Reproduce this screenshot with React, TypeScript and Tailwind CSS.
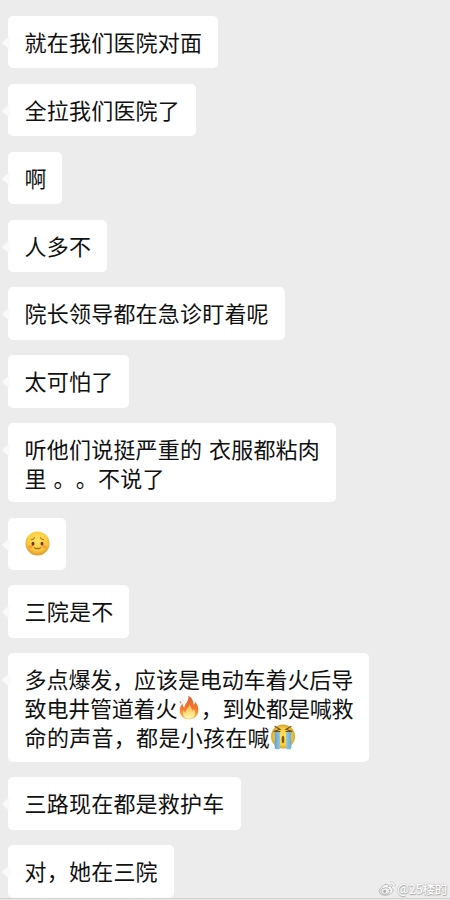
import type { ReactNode } from "react";

function ShyFace() {
  return (
    <svg viewBox="0 0 26 26" className="block size-[25px]">
      <defs>
        <radialGradient id="shy" cx="50%" cy="38%" r="62%">
          <stop offset="0" stopColor="#ffe564" />
          <stop offset="0.65" stopColor="#fdca3e" />
          <stop offset="1" stopColor="#dc982b" />
        </radialGradient>
        <radialGradient id="cheek">
          <stop offset="0" stopColor="#f56a30" stopOpacity="0.7" />
          <stop offset="1" stopColor="#f8852f" stopOpacity="0" />
        </radialGradient>
      </defs>
      <circle cx="13" cy="13" r="12.5" fill="url(#shy)" />
      <ellipse cx="5.8" cy="16.4" rx="3.6" ry="2.8" fill="url(#cheek)" />
      <ellipse cx="20.2" cy="16.4" rx="3.6" ry="2.8" fill="url(#cheek)" />
      <ellipse cx="8.3" cy="13.3" rx="1.5" ry="2" fill="#71360f" />
      <ellipse cx="17.7" cy="13.3" rx="1.5" ry="2" fill="#71360f" />
      <g fill="none" stroke="#a8651c" strokeWidth="1.1" strokeLinecap="round">
        <path d="M6.6 9Q8.8 8.8 9.9 7" />
        <path d="M19.4 9Q17.2 8.8 16.1 7" />
        <path d="M9.9 17.2Q11 19.2 13 17.9Q15 19.2 16.1 17.2" />
      </g>
    </svg>
  );
}

function Flame() {
  return (
    <svg viewBox="0 0 22 25" className="block h-[25px] w-[22px]">
      <defs>
        <linearGradient id="flame" x1="0" y1="0" x2="0" y2="1">
          <stop offset="0" stopColor="#df5930" />
          <stop offset="0.55" stopColor="#f37a31" />
          <stop offset="1" stopColor="#ffc248" />
        </linearGradient>
        <linearGradient id="core" x1="0" y1="0" x2="0" y2="1">
          <stop offset="0" stopColor="#ffab39" />
          <stop offset="0.7" stopColor="#ffe889" />
          <stop offset="1" stopColor="#fff5c4" />
        </linearGradient>
      </defs>
      <path d="M10.3.7C15 3.2 15.3 7 15.7 9.8C17 9 17 7.4 16.8 6.2C19.5 9.2 21 13 20.2 17C19.2 21.6 15.8 24.3 11.2 24.3C6 24.3 1.7 21 1.8 15.8C1.8 12.6 3.1 10.2 4.5 8.5C4.7 10.7 5.2 12 6.2 12.8C6.6 8.4 11.5 6 10.3.7Z" fill="url(#flame)" />
      <path d="M11.5 8.5C12 12 14.2 13 14.2 16C15.3 15.5 15.7 14.7 15.8 13.8C19 18.3 16.5 23.7 11.2 23.8C5.8 23.8 3.8 19.5 5.7 15.6C6.2 16.8 6.8 17.5 7.8 17.8C7.5 13.8 11.6 12.3 11.5 8.5Z" fill="url(#core)" />
      <path d="M2.3 6.1Q1.7 8 2.8 8.4Q3.8 7.4 2.3 6.1M4.5 4.5L5.2 5.8" fill="#ed6d33" stroke="#e49361" strokeWidth="0.5" />
    </svg>
  );
}

function CryingFace() {
  return (
    <svg viewBox="0 0 26 26" className="block size-[26px]">
      <defs>
        <radialGradient id="cry">
          <stop offset="0" stopColor="#ffe35c" />
          <stop offset="0.7" stopColor="#f9cf3d" />
          <stop offset="1" stopColor="#d4a22e" />
        </radialGradient>
        <linearGradient id="tear" x1="0" y1="0" x2="1" y2="0">
          <stop offset="0" stopColor="#64a3c8" />
          <stop offset="0.5" stopColor="#aedaf0" />
          <stop offset="1" stopColor="#6baacd" />
        </linearGradient>
      </defs>
      <circle cx="13" cy="12.6" r="12" fill="url(#cry)" />
      <path d="M4.7 8H10V24.7Q7.5 26 4.7 24.4ZM16 8H21.3V24.4Q18.5 26 16 24.7Z" fill="url(#tear)" />
      <g fill="none" stroke="#70501f" strokeWidth="1.2" strokeLinecap="round">
        <path d="M5 2.5L10 5.3L3.7 7.5H10" />
        <path d="M21 2.5L16 5.3L22.3 7.5H16" />
      </g>
      <ellipse cx="13" cy="15.5" rx="1.3" ry="3.7" fill="#805319" />
    </svg>
  );
}

function Bubble({ children, width, height = "h-[52.4px]" }: { children: ReactNode; width: string; height?: string }) {
  return (
    <div className={`relative flex shrink-0 flex-col rounded-[5px] bg-white pl-[16.3px] pt-[11px] whitespace-pre ${width} ${height}`}>
      <svg viewBox="0 0 8 14" className="absolute -left-[6.5px] top-[20px] h-[14px] w-[8px]">
        <path d="M8 0L1 5.8Q0 7 1 8.2L8 14Z" fill="#fafafa" />
      </svg>
      {children}
    </div>
  );
}

function Line({ children, spacing = "tracking-[0.2px]" }: { children: ReactNode; spacing?: string }) {
  return <div className={`flex h-[29px] items-center leading-[29px] ${spacing}`}>{children}</div>;
}

function WeiboMark() {
  return (
    <svg viewBox="0 0 20 17" className="h-[17px] w-[19px]" fill="none" stroke="#aaa" strokeWidth="0.9" strokeLinecap="round">
      <path d="M8.1 4.3C10 3.7 11.2 4.4 10.6 6.4C13 5.4 15.1 6.2 14 8.1C16.2 8.8 16.5 11.5 14.4 13.2C10.6 16.6 2.7 16.3 1.4 12.5C.5 9.7 4.7 5.3 8.1 4.3Z" fill="#fff" />
      <ellipse cx="7.8" cy="11.2" rx="4.8" ry="3.4" fill="#eee" transform="rotate(-8 7.8 11.2)" />
      <circle cx="7" cy="11.7" r="1.5" fill="#aaa" stroke="none" />
      <path d="M12.8 1.4C16.5.5 19.2 3.4 18 7M13.3 4C15.2 3.5 16.3 4.8 15.8 6.5" stroke="#fff" strokeWidth="2" />
      <path d="M12.8 1.4C16.5.5 19.2 3.4 18 7M13.3 4C15.2 3.5 16.3 4.8 15.8 6.5" strokeWidth="0.8" />
    </svg>
  );
}

export default function App() {
  return (
    <main className="relative h-[900px] w-[450px] overflow-hidden bg-[#ececec] font-['Noto_Sans_CJK_SC',sans-serif] text-[22px] text-[#111] [text-spacing-trim:space-all]">
      <div className="flex flex-col gap-[15.5px] pl-[8.3px] pt-[15.9px]">
        <Bubble width="w-[210px]"><Line>就在我们医院对面</Line></Bubble>
        <Bubble width="w-[187.5px]"><Line>全拉我们医院了</Line></Bubble>
        <Bubble width="w-[54px]"><Line>啊</Line></Bubble>
        <Bubble width="w-[98.5px]"><Line>人多不</Line></Bubble>
        <Bubble width="w-[276.6px]"><Line>院长领导都在急诊盯着呢</Line></Bubble>
        <Bubble width="w-[120.7px]"><Line>太可怕了</Line></Bubble>
        <Bubble width="w-[327.7px]" height="h-[78.8px]">
          <Line>听他们说挺严重的<span className="w-[6.8px]"> </span>衣服都粘肉</Line>
          <Line>里<span className="w-[6.8px]"> </span>。。不说了</Line>
        </Bubble>
        <Bubble width="w-[58px]"><Line><span className="pt-px"><ShyFace /></span></Line></Bubble>
        <Bubble width="w-[120.7px]"><Line>三院是不</Line></Bubble>
        <Bubble width="w-[360.3px]" height="h-[108.6px]">
          <Line spacing="tracking-[-0.1px]">多点爆发，应该是电动车着火后导</Line>
          <Line spacing="tracking-[-0.2px]">致电井管道着火<span className="pl-px pr-[0.5px]"><Flame /></span>，到处都是喊救</Line>
          <Line spacing="tracking-[0.3px]">命的声音，都是小孩在喊<CryingFace /></Line>
        </Bubble>
        <Bubble width="w-[232.3px]"><Line>三路现在都是救护车</Line></Bubble>
        <Bubble width="w-[165.3px]"><Line>对，她在三院</Line></Bubble>
      </div>
      <div className="absolute inset-x-0 top-[898px] h-[2px] border-t border-[#d0d0d0] bg-[#ececec]" />
      <div className="absolute left-[378px] top-[879px] flex h-[19px] items-center text-[12.5px] leading-[19px] text-white [text-shadow:0_0_1px_#999,0.5px_0.5px_1px_#aaa]">
        <WeiboMark /><span className="font-medium tracking-[-0.3px]">@25楼的</span>
      </div>
    </main>
  );
}
